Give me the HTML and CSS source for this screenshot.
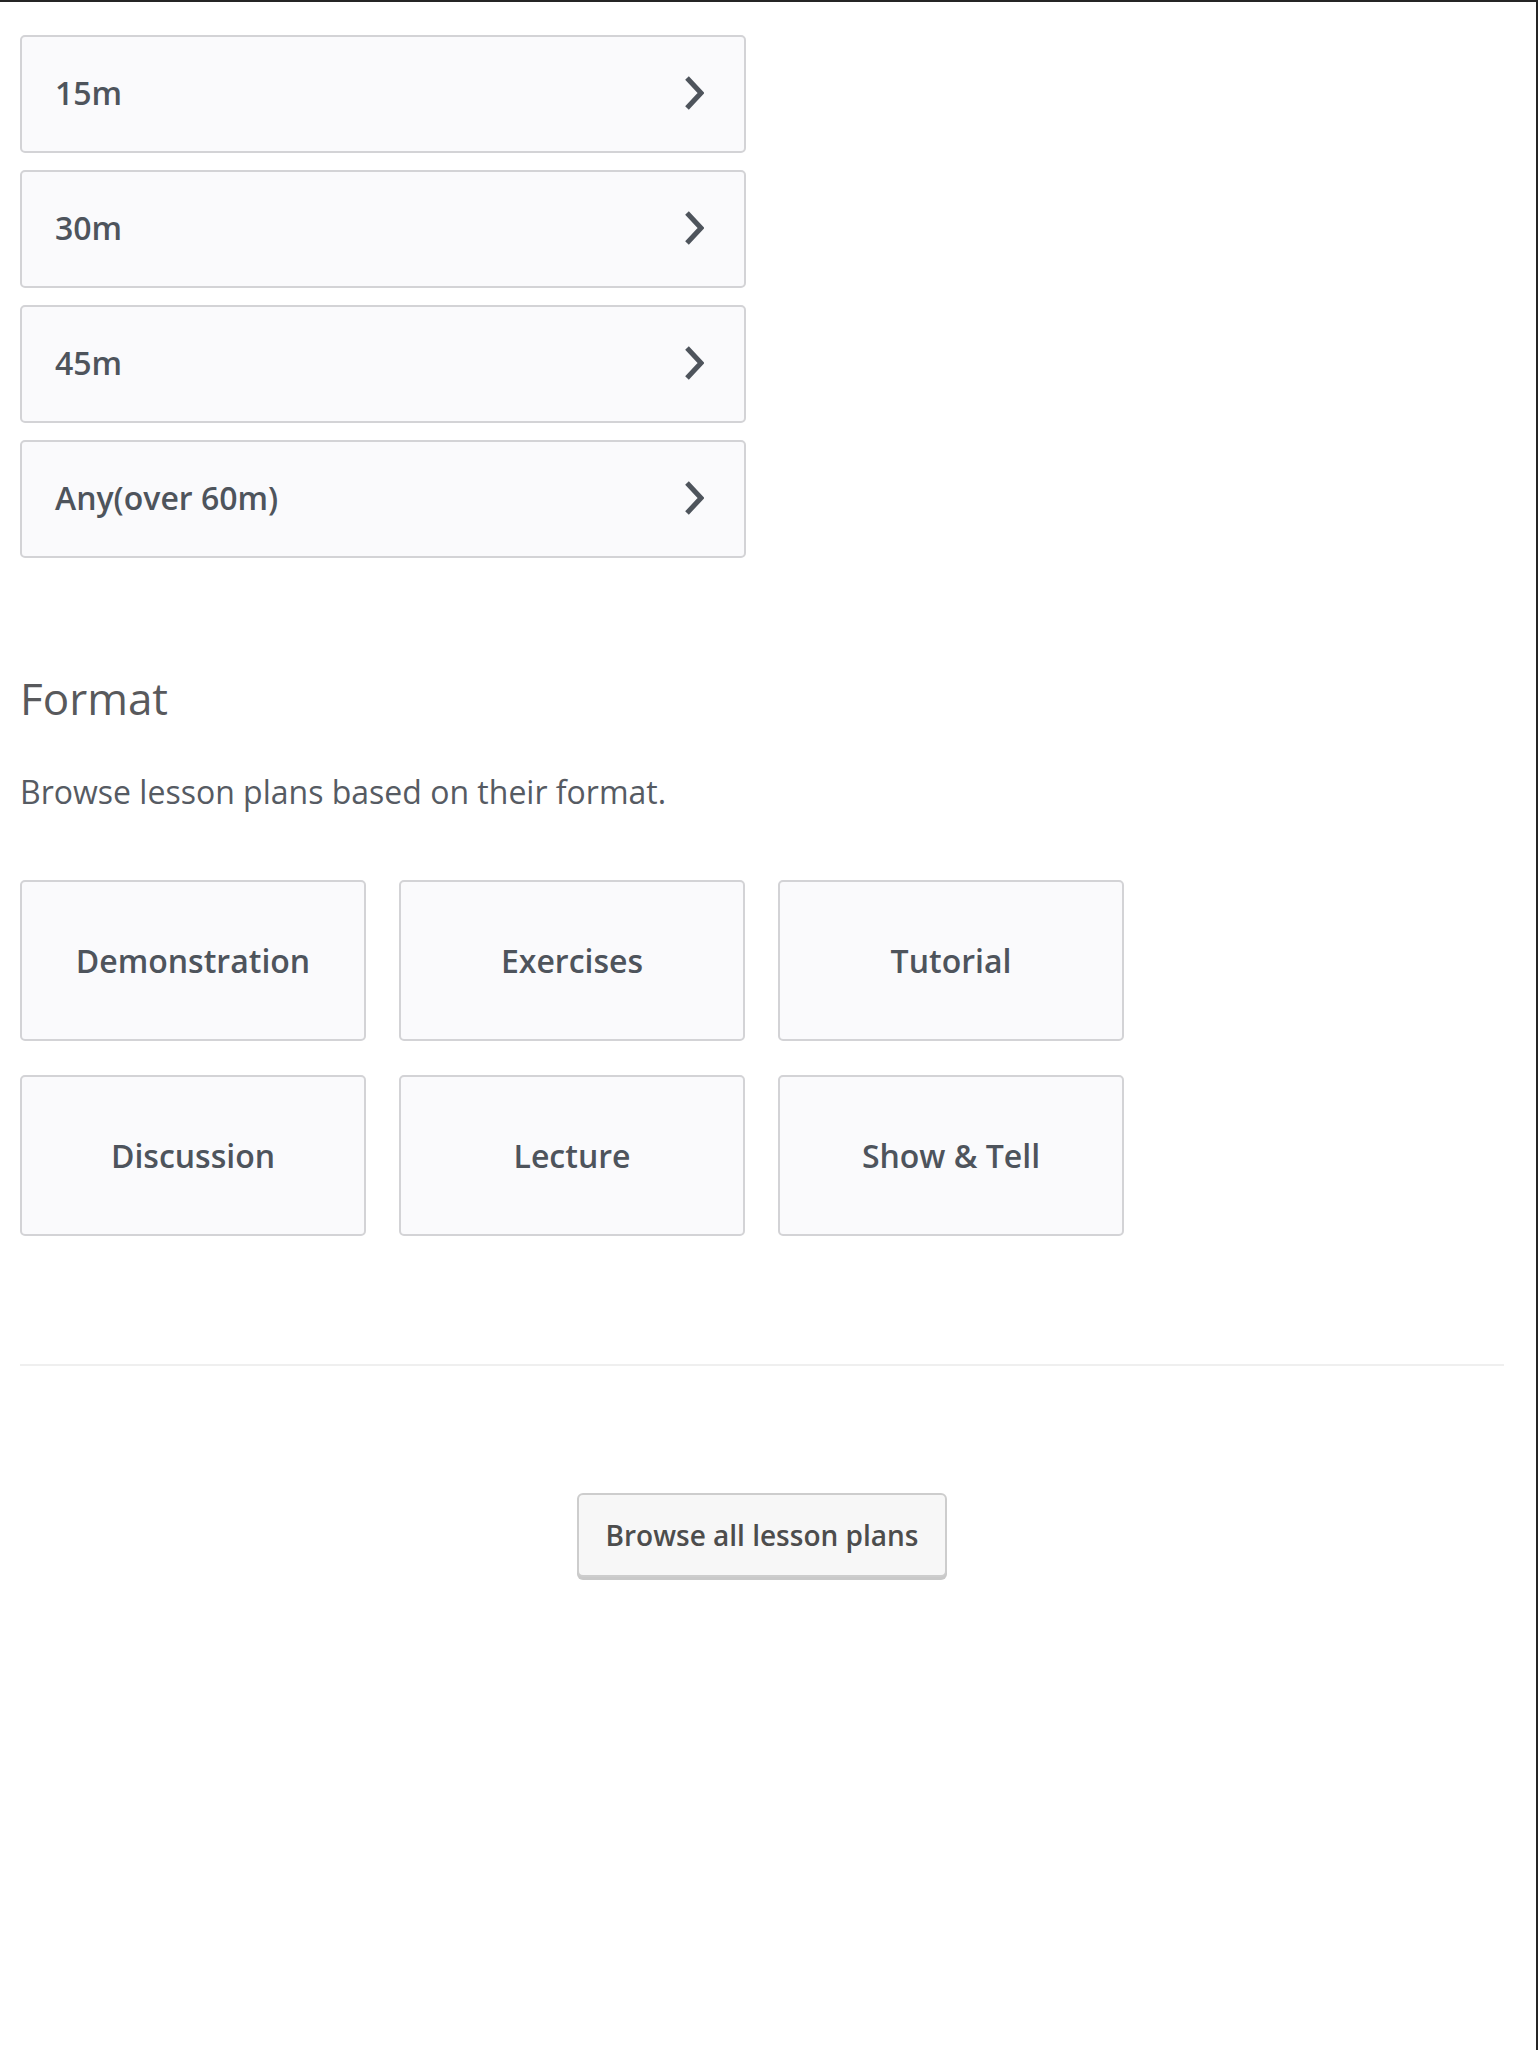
FILE: index.html
```html
<!DOCTYPE html>
<html lang="en">
<head>
<meta charset="utf-8">
<title>Lesson plans</title>
<link rel="stylesheet" href="styles.css">
</head>
<body>
<div class="frame">
  <main class="page">
    <ul class="durations">
      <li class="duration"><span>15m</span><svg class="chev" width="20" height="34" viewBox="0 0 20 34"><polyline points="3,2 17,17 3,32"/></svg></li>
      <li class="duration"><span>30m</span><svg class="chev" width="20" height="34" viewBox="0 0 20 34"><polyline points="3,2 17,17 3,32"/></svg></li>
      <li class="duration"><span>45m</span><svg class="chev" width="20" height="34" viewBox="0 0 20 34"><polyline points="3,2 17,17 3,32"/></svg></li>
      <li class="duration"><span>Any(over 60m)</span><svg class="chev" width="20" height="34" viewBox="0 0 20 34"><polyline points="3,2 17,17 3,32"/></svg></li>
    </ul>

    <section class="format">
      <h2 class="title">Format</h2>
      <p class="lead">Browse lesson plans based on their format.</p>
      <div class="cards">
        <div class="card">Demonstration</div>
        <div class="card">Exercises</div>
        <div class="card">Tutorial</div>
        <div class="card">Discussion</div>
        <div class="card">Lecture</div>
        <div class="card">Show &amp; Tell</div>
      </div>
    </section>

    <hr class="divider">

    <div class="actions">
      <button class="btn" type="button">Browse all lesson plans</button>
    </div>
  </main>
</div>
</body>
</html>
```

FILE: styles.css
```css
* { box-sizing: border-box; }

html, body {
  margin: 0;
  padding: 0;
  background: #ffffff;
}

body {
  font-family: "Open Sans", "Noto Sans", sans-serif;
  color: #555b63;
}

.frame {
  min-height: 2050px;
  border-top: 2px solid #252525;
  border-right: 2px solid #252525;
  background: #fff;
}

.page {
  margin: 0 32px 0 20px;
  padding-top: 33px;
}

.durations {
  list-style: none;
  margin: 0;
  padding: 0;
  width: 726px;
  display: flex;
  flex-direction: column;
  gap: 17px;
}

.duration {
  height: 118px;
  display: flex;
  align-items: center;
  justify-content: space-between;
  padding: 0 40px 3px 33px;
  background: #fafafc;
  border: 2px solid #d3d3d6;
  border-radius: 5px;
  font-size: 32px;
  font-weight: 600;
  color: #4e545c;
}

.chev {
  display: block;
  margin-top: 1px;
}

.chev polyline {
  fill: none;
  stroke: #4e545c;
  stroke-width: 5;
  stroke-linejoin: miter;
}

.format {
  margin-top: 110px;
}

.title {
  margin: 0;
  font-size: 44px;
  line-height: 60px;
  font-weight: 400;
  color: #58595c;
}

.lead {
  margin: 42px 0 0;
  font-size: 32px;
  line-height: 44px;
  color: #565b63;
}

.cards {
  margin-top: 66px;
  display: grid;
  grid-template-columns: repeat(3, 346px);
  column-gap: 33px;
  row-gap: 34px;
}

.card {
  height: 161px;
  display: flex;
  align-items: center;
  justify-content: center;
  background: #fafafc;
  border: 2px solid #d3d3d6;
  border-radius: 5px;
  font-size: 32px;
  font-weight: 600;
  color: #4e545c;
}

.divider {
  margin: 128px 0 0;
  border: 0;
  height: 2px;
  background: #efefef;
}

.actions {
  margin-top: 127px;
  display: flex;
  justify-content: center;
}

.btn {
  height: 84px;
  padding: 0 27px;
  background: #f7f7f7;
  border: 2px solid #cdcdcd;
  border-radius: 6px;
  box-shadow: 0 3px 0 #c9c9c9;
  font-family: "Open Sans", "Noto Sans", sans-serif;
  font-size: 28px;
  font-weight: 600;
  color: #4d4d4d;
  cursor: pointer;
}
```
